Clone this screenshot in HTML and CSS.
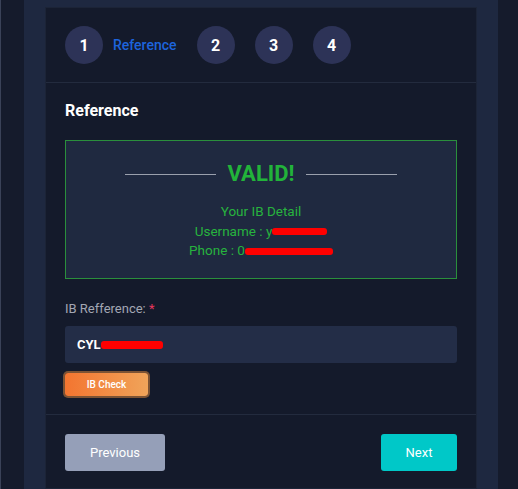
FILE: index.html
```html
<!DOCTYPE html>
<html>
<head>
<meta charset="utf-8">
<link rel="stylesheet" href="styles.css">
</head>
<body>
<div class="page">
  <div class="band">
    <div class="card">
      <div class="steps">
        <div class="step"><span class="num">1</span><span class="step-label">Reference</span></div>
        <div class="step"><span class="num">2</span></div>
        <div class="step"><span class="num">3</span></div>
        <div class="step"><span class="num">4</span></div>
      </div>
      <div class="body">
        <h2 class="title">Reference</h2>
        <div class="valid-box">
          <div class="valid-head"><span class="rule"></span><span class="valid">VALID!</span><span class="rule"></span></div>
          <div class="detail">Your IB Detail</div>
          <div class="detail">Username : y<span class="redact r1"></span></div>
          <div class="detail">Phone : 0<span class="redact r2"></span></div>
        </div>
        <label class="label">IB Refference: <span class="req">*</span></label>
        <div class="input">CYL<span class="redact r3"></span></div>
        <button class="check">IB Check</button>
      </div>
      <div class="footer">
        <button class="btn prev">Previous</button>
        <button class="btn next">Next</button>
      </div>
    </div>
  </div>
</div>
</body>
</html>
```
FILE: styles.css
```css
* { box-sizing: border-box; }
html, body { margin: 0; padding: 0; }
body {
  background: #151b2c;
  font-family: Roboto, "Liberation Sans", sans-serif;
  width: 518px;
  height: 489px;
  overflow: hidden;
  border-left: 1px solid #3a4258;
}
.page { padding-left: 23px; padding-right: 20px; height: 489px; }
.band {
  background: #1e2840;
  padding: 7px 21px 0 21px;
  height: 489px;
}
.card {
  background: #141a2b;
  border: 1px solid #1c2437;
  height: 482px;
}
.steps {
  display: flex;
  align-items: center;
  padding: 18px 19px 18px 19px;
  border-bottom: 1px solid #232b3e;
  height: 75px;
}
.step { display: flex; align-items: center; margin-right: 20px; }
.num {
  width: 38px; height: 38px; border-radius: 50%;
  background: #2d3357;
  color: #fff; font-weight: 700; font-size: 16px;
  display: flex; align-items: center; justify-content: center;
}
.step-label { color: #1d64dc; font-size: 14px; margin-left: 10px; font-weight: 500; }
.body { padding: 18px 19px 18px 19px; border-bottom: 1px solid #232b3e; }
.title { color: #fff; font-size: 16px; font-weight: 700; margin: 0 0 20px 0; line-height: 19px; }
.valid-box {
  border: 1px solid #2a8f3c;
  background: #1f2940;
  height: 139px;
  padding-top: 19px;
  text-align: center;
  color: #27b33e;
  font-size: 13.5px;
}
.valid-head { display: flex; align-items: center; justify-content: center; margin-bottom: 14px; }
.rule { width: 91px; height: 1px; background: #9aa0ad; }
.valid { font-size: 22px; font-weight: 700; margin: 0 12px; line-height: 28px; color: #22b33a; }
.detail { line-height: 19.5px; }
.redact { display: inline-block; height: 7px; background: #ff0000; vertical-align: middle; border-radius: 3px; }
.r1 { width: 55px; }
.r2 { width: 88px; }
.r3 { width: 62px; height: 8px; }
.label { display: block; color: #a3a7b3; font-size: 13px; margin: 22px 0 9px 0; line-height: 16px; }
.req { color: #e8365d; }
.input {
  background: #232d47;
  border-radius: 3px;
  height: 37px;
  display: flex; align-items: center;
  padding-left: 12px;
  color: #fff; font-weight: 700; font-size: 13px;
}
.check {
  margin-top: 10px;
  display: block;
  border: none;
  border-radius: 3px;
  background: linear-gradient(90deg, #f37530, #f0a45a);
  color: #fff;
  font-family: inherit;
  font-size: 10px;
  font-weight: 500;
  width: 83px;
  height: 23px;
  box-shadow: 0 0 0 2px #7c5334;
}
.footer {
  display: flex; justify-content: space-between;
  padding: 19px 19px;
}
.btn {
  height: 37px; border: none; border-radius: 3px;
  color: #fff; font-family: inherit; font-size: 13px;
}
.prev { width: 100px; background: #959fb8; }
.next { width: 76px; background: #00c8c8; }
```
